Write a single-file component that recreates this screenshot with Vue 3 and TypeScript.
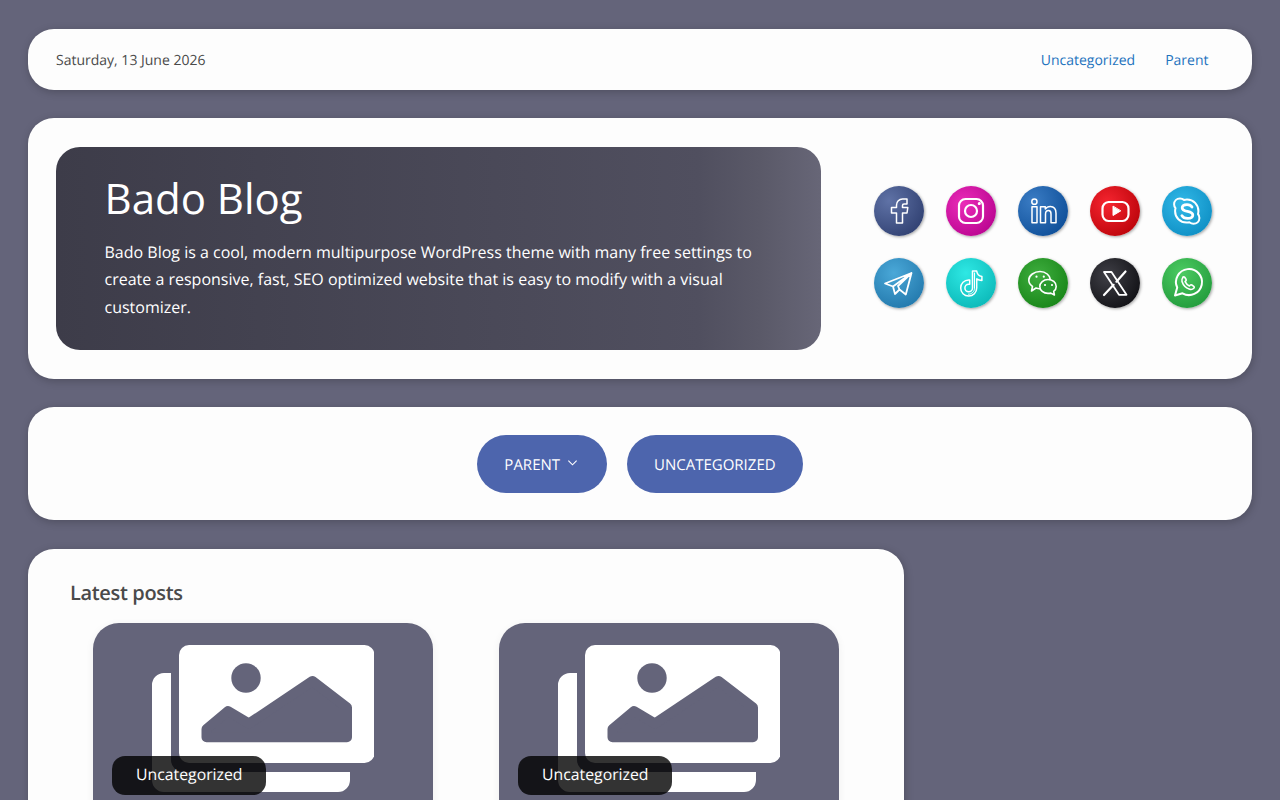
<template>
  <div class="page">
    <header class="card topbar">
      <span class="date">Saturday, 13 June 2026</span>
      <nav class="top-links">
        <a href="#">Uncategorized</a>
        <a href="#">Parent</a>
      </nav>
    </header>

    <section class="card masthead">
      <div class="hero">
        <h1>Bado Blog</h1>
        <p>Bado Blog is a cool, modern multipurpose WordPress theme with many free settings to create a responsive, fast, SEO optimized website that is easy to modify with a visual customizer.</p>
      </div>
      <div class="socials">
        <a v-for="s in socials" :key="s.name" href="#" class="social" :class="s.name" :aria-label="s.name">
          <svg viewBox="0 0 50 50" width="50" height="50" fill="none" stroke="#fff" stroke-linejoin="round" stroke-linecap="round">
            <path v-for="(p, i) in s.paths" :key="i" :d="p.d" :stroke-width="p.w" :fill="p.fill || 'none'" />
          </svg>
        </a>
      </div>
    </section>

    <nav class="card menu">
      <a href="#" class="menu-btn">
        PARENT
        <svg viewBox="0 0 12 8" width="11" height="8" fill="none" stroke="#fff" stroke-width="1.2"><path d="M1.5 1.5 6 6l4.500-4.500" /></svg>
      </a>
      <a href="#" class="menu-btn">UNCATEGORIZED</a>
    </nav>

    <main class="card posts">
      <h2>Latest posts</h2>
      <div class="post-grid">
        <article v-for="n in 2" :key="n" class="thumb">
          <svg class="placeholder" viewBox="0 0 223 147" width="223" height="147">
            <path fill="#fff" d="M20 28h-7A12 12 0 0 0 1 40v95a12 12 0 0 0 12 12h174a12 12 0 0 0 12-12v-8H32a12 12 0 0 1-12-12z" />
            <rect x="28" width="195.500" height="118" rx="10" fill="#fff" />
            <circle cx="95" cy="33" r="14.700" fill="#64647a" />
            <path fill="#64647a" stroke="#64647a" stroke-width="10" stroke-linejoin="round" d="M55.500 84 77 66 98 78.500 161.500 36 196 62.500V92.300H55.500z" />
          </svg>
          <span class="badge">Uncategorized</span>
        </article>
      </div>
    </main>
  </div>
</template>

<script setup lang="ts">
interface IconPath {
  d: string
  w: number
  fill?: string
}

const socials: { name: string; paths: IconPath[] }[] = [
  {
    name: 'facebook',
    paths: [{ d: 'M33 13h-4.500a6 6 0 0 0-6 6v2.500h-5V27h5v10h6V27h4.500l.8-5.500h-5.300v-2a1.600 1.600 0 0 1 1.600-1.600h2.900z', w: 1.500 }]
  },
  {
    name: 'instagram',
    paths: [
      { d: 'M19.500 13h11a6.500 6.500 0 0 1 6.500 6.500v11a6.500 6.500 0 0 1-6.500 6.500h-11a6.500 6.500 0 0 1-6.500-6.500v-11a6.500 6.500 0 0 1 6.500-6.500z', w: 2.200 },
      { d: 'M31 25a6 6 0 1 1-12 0 6 6 0 0 1 12 0z', w: 2.200 },
      { d: 'M32.500 17.500a.8.8 0 1 1 0 .1z', w: 1.500, fill: '#fff' }
    ]
  },
  {
    name: 'linkedin',
    paths: [
      { d: 'M19 15.700a2.600 2.600 0 1 1-5.200 0 2.600 2.600 0 0 1 5.200 0z', w: 1.500 },
      { d: 'M14 20.700h5v16h-5z', w: 1.500 },
      { d: 'M22.500 20.700h4.800V23c1-1.500 3-2.600 5-2.600 4 0 5.700 2.600 5.700 6.800v9.500h-5v-8.700c0-2-.8-3.400-2.500-3.400-2 0-3 1.400-3 3.600v8.500h-5z', w: 1.500 }
    ]
  },
  {
    name: 'youtube',
    paths: [
      { d: 'M18.500 16h14a6.500 6.500 0 0 1 6 6.500v6a6.500 6.500 0 0 1-6 6.500h-14a6.500 6.500 0 0 1-6-6.500v-6a6.500 6.500 0 0 1 6-6.500z', w: 2.200 },
      { d: 'M23 20.500v9l7.500-4.500z', w: 1, fill: '#fff' }
    ]
  },
  {
    name: 'skype',
    paths: [
      { d: 'M18 12.500c1.600 0 3 .6 4 1.400 1-.2 2-.3 3-.3 6.500 0 11.400 5 11.400 11.400 0 1-.1 2-.4 3 .9 1.100 1.400 2.500 1.400 4 0 3.500-2.800 5.700-5.900 5.700-1.600 0-3-.6-4.100-1.400-.9.2-1.900.3-2.900.3-6.400 0-11.400-5-11.400-11.400 0-1 .1-2 .4-3-.9-1.100-1.400-2.500-1.400-4 0-3.300 2.500-5.700 5.900-5.700z', w: 2 },
      { d: 'M30 21c-1-1.600-2.800-2.400-5-2.400-2.900 0-4.800 1.300-4.800 3.300 0 4.600 10.600 2.400 10.600 7.100 0 2.100-2.300 3.400-5.200 3.400-2.700 0-4.700-1-5.700-2.800', w: 2.800 }
    ]
  },
  {
    name: 'telegram',
    paths: [{ d: 'M37.500 15 11 25.500l8 3 2 7.500 4.500-4.500 6.300 5zM19 28.500 37.500 15 24 28l1.500 3.500', w: 1.800 }]
  },
  {
    name: 'tiktok',
    paths: [
      { d: 'M26.500 13h4.200c.3 3 2.200 5 5.200 5.500v4c-2 0-3.800-.6-5.200-1.600v9.100c0 4.500-3.500 8-8 8s-8-3.500-8-8 3.500-8 8-8h1v4.200h-1c-2.100 0-3.800 1.700-3.800 3.800s1.700 3.800 3.800 3.800 3.800-1.700 3.800-3.800z', w: 1.500 },
      { d: 'M28.500 15v15.200c0 3.400-2.600 6-6 6', w: 1 }
    ]
  },
  {
    name: 'wechat',
    paths: [
      { d: 'M22 13.500c5.600 0 10.200 3.800 10.200 8.600 0 4.800-4.600 8.600-10.200 8.600-1.400 0-2.800-.2-4-.7L13.500 33l1-4.500c-2.300-1.600-3.700-3.800-3.700-6.400 0-4.800 5.600-8.600 11.200-8.600z', w: 1.600 },
      { d: 'M30 21.500c4.500 0 8.200 3 8.200 6.900 0 2-1 3.800-2.500 5l.7 3.600-3.600-1.900c-.9.2-1.800.3-2.800.3-4.500 0-8.200-3-8.200-6.900s3.700-7 8.200-7z', w: 1.600, fill: '#2a9a30' },
      { d: 'M18.500 18.700h.01M25.800 18.700h.01M27 27h.01M34 27h.01', w: 2.200 }
    ]
  },
  {
    name: 'xlogo',
    paths: [
      { d: 'M14 14h7.500L36.500 36.800H29z', w: 1.800 },
      { d: 'M35.500 13.500 26.400 23.700M23.600 26.800 14 37', w: 2.200 }
    ]
  },
  {
    name: 'whatsapp',
    paths: [
      { d: 'M13 37.500 15.200 29.500A13 13 0 1 1 20.500 35.300z', w: 2 },
      { d: 'M21 19.500c-1 1-1.500 2.300-1 4 1.200 3.800 4 6.600 7.800 7.800 1.700.5 3 0 4-1 .6-.6.6-1.500 0-2l-2-1.300c-.6-.4-1.200-.3-1.700.2l-.7.7c-2-.9-3.400-2.400-4.300-4.300l.7-.7c.5-.5.6-1.100.2-1.700l-1.300-2c-.5-.6-1.400-.6-2 0z', w: 1.600 }
    ]
  }
]
</script>

<style>
html, body {
  margin: 0;
  background: #64647a;
}
</style>

<style scoped>
.page {
  box-sizing: border-box;
  height: 800px;
  overflow: hidden;
  padding: 29px 28px 0;
  display: flex;
  flex-direction: column;
  gap: 28px;
  font-family: "Open Sans", "Liberation Sans", sans-serif;
  color: #4a4a4a;
  text-rendering: geometricPrecision;
}

.card {
  flex: none;
  background: #fdfdfd;
  border-radius: 26px;
  box-shadow: 1px 2px 8px rgba(0, 0, 0, 0.22);
}

a {
  text-decoration: none;
}

.topbar {
  box-sizing: border-box;
  height: 61px;
  padding: 1px 28px 0;
  display: flex;
  align-items: center;
  justify-content: space-between;
  font-size: 14px;
}

.top-links {
  display: flex;
  gap: 30px;
  padding-right: 15.5px;
}

.top-links a {
  color: #1e73be;
}

.masthead {
  padding: 29px 28px;
  display: flex;
  align-items: center;
  justify-content: space-between;
}

.hero {
  box-sizing: border-box;
  width: 765px;
  height: 203px;
  padding: 24px 48.5px 0;
  border-radius: 24px;
  color: #fff;
  background: linear-gradient(90deg, #3d3c49 0%, #504f5f 84%, #5a5968 92%, #676677 100%);
}

.hero h1 {
  margin: 0;
  font-size: 42px;
  font-weight: 400;
  line-height: 56px;
}

.hero p {
  margin: 11.7px 0 0;
  font-size: 16px;
  line-height: 27.5px;
}

.socials {
  display: grid;
  grid-template-columns: repeat(5, 72px);
  grid-auto-rows: 72px;
  place-items: center;
  padding-bottom: 3px;
  margin-right: 1px;
}

.social {
  display: block;
  width: 50px;
  height: 50px;
  border-radius: 50%;
  box-shadow: 1px 1px 3px rgba(0, 0, 0, 0.35);
}

.social svg {
  display: block;
}

.facebook { background: radial-gradient(circle at 30% 30%, #5f72a6, #2f3f70 85%); }
.instagram { background: radial-gradient(circle at 35% 35%, #ea2cb8, #b4008c 90%); }
.linkedin { background: radial-gradient(circle at 30% 30%, #3a7cc4, #0a4a94 90%); }
.youtube { background: radial-gradient(circle at 35% 35%, #f62530, #b50006 90%); }
.skype { background: radial-gradient(circle at 40% 35%, #32b9e8, #0a8ac0 90%); }
.telegram { background: radial-gradient(circle at 40% 30%, #4aa8d8, #1f74a8 90%); }
.tiktok { background: radial-gradient(circle at 40% 30%, #2ee8e4, #08b4b4 90%); }
.wechat { background: radial-gradient(circle at 40% 35%, #3fae3f, #138013 90%); }
.xlogo { background: radial-gradient(circle at 35% 35%, #3f3f46, #0c0c10 90%); }
.whatsapp { background: radial-gradient(circle at 40% 30%, #4ccb62, #1e9638 90%); }

.menu {
  height: 113px;
  display: flex;
  align-items: center;
  justify-content: center;
  gap: 20px;
}

.menu-btn {
  box-sizing: border-box;
  height: 58px;
  padding: 2px 27px 0;
  display: flex;
  align-items: center;
  gap: 7px;
  border-radius: 29px;
  background: #4d65ad;
  color: #fff;
  font-size: 15px;
}

.menu-btn svg {
  margin: -3px 2px 0 0;
}

.posts {
  margin-top: 1px;
  width: 876px;
  height: 400px;
}

.posts h2 {
  margin: 0;
  padding: 30px 42px 0;
  font-size: 20px;
  font-weight: 600;
  line-height: 28px;
  letter-spacing: -0.35px;
}

.post-grid {
  margin-top: 16px;
  padding: 0 65px;
  display: flex;
  justify-content: space-between;
}

.thumb {
  position: relative;
  box-sizing: border-box;
  width: 340px;
  height: 260px;
  padding-top: 22px;
  display: flex;
  justify-content: center;
  align-items: flex-start;
  border-radius: 26px;
  background: #64647a;
  box-shadow: 0 2px 8px rgba(0, 0, 0, 0.06);
}

.placeholder {
  display: block;
  margin-right: 1px;
}

.badge {
  position: absolute;
  left: 19px;
  top: 133px;
  padding: 0 23px 0 24px;
  height: 39px;
  line-height: 37px;
  border-radius: 13px;
  background: rgba(0, 0, 0, 0.8);
  color: #fff;
  font-size: 15.8px;
}
</style>
